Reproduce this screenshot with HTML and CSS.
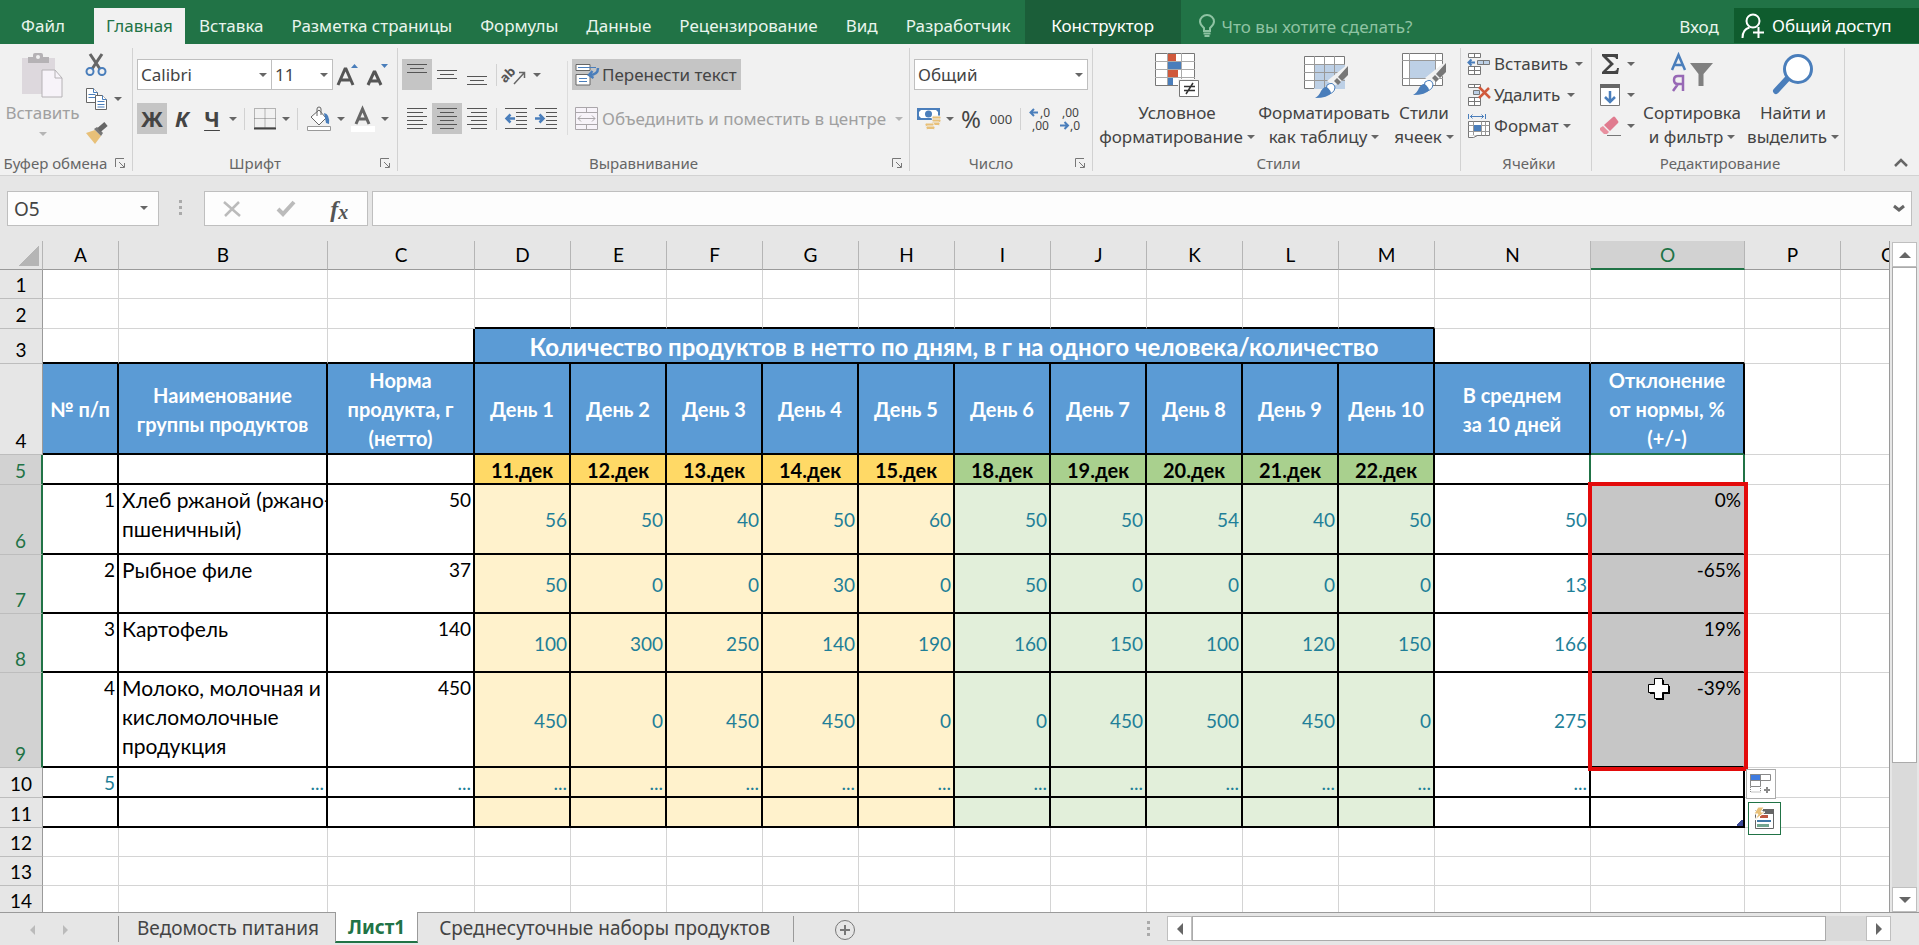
FILE: index.html
```
<!DOCTYPE html>
<html lang="ru">
<head>
<meta charset="utf-8">
<title>Ведомость питания</title>
<link rel="stylesheet" href="styles.css">
</head>
<body>
<nav class="tabs" aria-label="Лента">
  <button class="tab file">Файл</button>
  <button class="tab active">Главная</button>
  <button class="tab">Вставка</button>
  <button class="tab">Разметка страницы</button>
  <button class="tab">Формулы</button>
  <button class="tab">Данные</button>
  <button class="tab">Рецензирование</button>
  <button class="tab">Вид</button>
  <button class="tab">Разработчик</button>
  <button class="tab context">Конструктор</button>
  <label class="tell">
    <svg width="16" height="24" viewBox="0 0 16 24" fill="none" stroke="#8fc3a3" stroke-width="2"><path d="M5 17v-3C3 12 1 10.500 1 7.500a7 6.500 0 0 1 14 0c0 3-2 4.500-4 6.500v3z"/><path d="M4.500 19.500h7M5.500 22h5"/></svg>
    <input type="text" aria-label="Помощник" placeholder="Что вы хотите сделать?">
  </label>
  <button class="signin">Вход</button>
  <button class="share">
    <svg width="24" height="26" viewBox="0 0 24 26" fill="none" stroke="#fff" stroke-width="2"><circle cx="12" cy="8" r="6.500"/><path d="M1.500 25c0-6 3-9.500 7-10.500M12 19.500h11M17.500 14v11"/></svg>
    Общий доступ
  </button>
</nav>

<div class="ribbon">
  <section class="group g-clip">
    <div class="body">
      <button class="big off">
        <svg width="44" height="46" viewBox="0 0 44 46"><path d="M1 6h33v36H1z" fill="#ddd8dd"/><path d="M7 11V5h5V3q0-2 2-2h6q2 0 2 2v2h6v6z" fill="#b5b2b5"/><circle cx="17" cy="5" r="2" fill="#f1f1f1"/><path d="M21 18h13l7 8v19H21z" fill="#f7f3f9" stroke="#b5b2b5"/><path d="M34 18v8h7" fill="none" stroke="#b5b2b5"/></svg>
        <span>Вставить</span><i class="arr"></i>
      </button>
      <div class="stack">
        <button class="row" aria-label="Вырезать"><svg width="22" height="24" viewBox="0 0 22 24"><path d="M5 1l10 15M17 1L7 16" stroke="#666" stroke-width="3"/><g fill="none" stroke="#4a7ebb" stroke-width="2"><circle cx="5" cy="18.500" r="3.500"/><circle cx="17" cy="18.500" r="3.500"/></g></svg></button>
        <button class="row" aria-label="Копировать"><svg width="22" height="24" viewBox="0 0 22 24" fill="#fff" stroke="#666"><path d="M1.500 1.500h7l4 4v10h-11z"/><path d="M8.500 1.500v4h4M3.500 7.500h7M3.500 10.500h7" stroke="#4a7ebb"/><path d="M10.500 8.500h7l4 4v10h-11z"/><path d="M17.500 8.500v4h4M12.500 14.500h7M12.500 17.500h7M12.500 20h7" stroke="#4a7ebb"/></svg><i class="arr"></i></button>
        <button class="row" aria-label="Формат по образцу"><svg width="24" height="22" viewBox="0 0 24 22"><path d="M1 11l9-3 6 6-6 8z" fill="#e8c078"/><path d="M9 7l3-2 6 6-2 3z" fill="#777"/><path d="M14 8l7-6" stroke="#666" stroke-width="5"/></svg></button>
      </div>
    </div>
    <div class="cap"><span>Буфер обмена</span><button class="launch" aria-label="Параметры буфера обмена"><svg width="10" height="10" viewBox="0 0 10 10" fill="none" stroke="#777"><path d="M.5 9V.5H9M4 4l5 5M9.500 5v4.500H5"/></svg></button></div>
  </section>

  <section class="group g-font">
    <div class="body rows">
      <div class="line">
        <span class="combo c-font"><select aria-label="Шрифт"><option>Calibri</option></select><i class="arr"></i></span>
        <span class="combo c-size"><select aria-label="Размер шрифта"><option>11</option></select><i class="arr"></i></span>
        <button class="ib" aria-label="Увеличить размер"><svg width="22" height="24" viewBox="0 0 22 24"><path d="M1 22L8 6h1l7 16M4 17h9" fill="none" stroke="#555" stroke-width="3"/><path d="M14 5l3.500-4L21 5z" fill="#4a7ebb"/></svg></button>
        <button class="ib" aria-label="Уменьшить размер"><svg width="22" height="24" viewBox="0 0 22 24"><path d="M1 22L7 9h1l6 13M4 18h7" fill="none" stroke="#555" stroke-width="3"/><path d="M14 1l3.500 4L21 1z" fill="#4a7ebb"/></svg></button>
      </div>
      <div class="line">
        <button class="ib on bold">Ж</button><button class="ib bold ital">К</button><button class="ib bold under">Ч</button><button class="ab" aria-label="Вид подчёркивания"><i class="arr"></i></button>
        <i class="sep"></i>
        <button class="ib" aria-label="Границы"><svg width="22" height="22" viewBox="0 0 22 22" fill="none" stroke="#777" stroke-dasharray="1 1"><path d="M.5 .5h21v19H.5zM11 .5v20M.5 10.500h21"/><path d="M0 20.500h22" stroke="#444" stroke-dasharray="none" stroke-width="2"/></svg></button><button class="ab" aria-label="Вид границ"><i class="arr"></i></button>
        <i class="sep"></i>
        <button class="ib wide" aria-label="Цвет заливки"><svg width="26" height="26" viewBox="0 0 26 26"><path d="M5 11l8-7 7 8-7 7z" fill="#fff" stroke="#666"/><path d="M11 10V3q0-2 2-2t2 2v6" fill="none" stroke="#666"/><path d="M18 7q6 1 5 11l-3-1z" fill="#4a7ebb"/><path d="M1.500 20.500h23v4h-23z" fill="#fff" stroke="#999"/></svg></button><button class="ab" aria-label="Цвета заливки"><i class="arr"></i></button>
        <button class="ib wide" aria-label="Цвет шрифта"><svg width="26" height="26" viewBox="0 0 26 26"><path d="M6 18L12.500 3 19 18M8.500 13h8" fill="none" stroke="#666" stroke-width="3"/><path d="M1 20h24v6H1z" fill="#fff"/></svg></button><button class="ab" aria-label="Цвета шрифта"><i class="arr"></i></button>
      </div>
    </div>
    <div class="cap"><span>Шрифт</span><button class="launch" aria-label="Параметры шрифта"><svg width="10" height="10" viewBox="0 0 10 10" fill="none" stroke="#777"><path d="M.5 9V.5H9M4 4l5 5M9.500 5v4.500H5"/></svg></button></div>
  </section>

  <section class="group g-align">
    <div class="body">
      <div class="rows align-l">
        <div class="line">
          <button class="ib on" aria-label="По верхнему краю"><svg width="20" height="24" viewBox="0 0 20 24" stroke="#555"><path d="M0 1.500h20M3 5.500h14M0 9.500h20"/></svg></button>
          <button class="ib" aria-label="Посередине"><svg width="20" height="24" viewBox="0 0 20 24" stroke="#555"><path d="M0 7.500h20M3 11.500h14M0 15.500h20"/></svg></button>
          <button class="ib" aria-label="По нижнему краю"><svg width="20" height="24" viewBox="0 0 20 24" stroke="#555"><path d="M0 13.500h20M3 17.500h14M0 21.500h20"/></svg></button>
          <i class="sep"></i>
          <button class="ib" aria-label="Ориентация"><svg width="22" height="22" viewBox="0 0 22 22"><text x="-6" y="9" transform="rotate(-45 5 9) translate(0 4)" class="i-ab">ab</text><path d="M9 20L19 9M14 8.500h5.500V14" fill="none" stroke="#666" stroke-width="1.500"/></svg></button><button class="ab" aria-label="Виды ориентации"><i class="arr"></i></button>
        </div>
        <div class="line">
          <button class="ib" aria-label="По левому краю"><svg width="20" height="22" viewBox="0 0 20 22" stroke="#555"><path d="M0 .5h20M0 4.500h16M0 8.500h20M0 12.500h16M0 16.500h20M0 20.500h16"/></svg></button>
          <button class="ib on" aria-label="По центру"><svg width="20" height="22" viewBox="0 0 20 22" stroke="#555"><path d="M0 .5h20M3 4.500h14M0 8.500h20M3 12.500h14M0 16.500h20M3 20.500h14"/></svg></button>
          <button class="ib" aria-label="По правому краю"><svg width="20" height="22" viewBox="0 0 20 22" stroke="#555"><path d="M0 .5h20M4 4.500h16M0 8.500h20M4 12.500h16M0 16.500h20M4 20.500h16"/></svg></button>
          <i class="sep"></i>
          <button class="ib" aria-label="Уменьшить отступ"><svg width="22" height="22" viewBox="0 0 22 22" stroke="#555"><path d="M0 .5h22M11 4.500h11M11 8.500h11M11 12.500h11M11 16.500h11M0 20.500h22"/><path d="M10 10.500H2M5.500 6.500l-4 4 4 4" fill="none" stroke="#4a7ebb" stroke-width="2.500"/></svg></button>
          <button class="ib" aria-label="Увеличить отступ"><svg width="22" height="22" viewBox="0 0 22 22" stroke="#555"><path d="M0 .5h22M11 4.500h11M11 8.500h11M11 12.500h11M11 16.500h11M0 20.500h22"/><path d="M0 10.500h8M4.500 6.500l4 4-4 4" fill="none" stroke="#4a7ebb" stroke-width="2.500"/></svg></button>
        </div>
      </div>
      <i class="tall"></i>
      <div class="rows">
        <div class="line"><button class="wrap on"><svg width="24" height="24" viewBox="0 0 24 24" fill="#fff" stroke="#666"><path d="M1 1.500h14v6H1zM1 11.500h14v10.500H1z"/><path d="M3 4.500h18M4 15.500h8M4 18.500h8" stroke="#4a7ebb"/><path d="M23 5c0 5-3 7-9 7M17.500 8L14 12l4.500 3" fill="none" stroke="#4a7ebb" stroke-width="2.500"/></svg>Перенести текст</button></div>
        <div class="line"><button class="wrap off"><svg width="24" height="24" viewBox="0 0 24 24" fill="#f7f3f9" stroke="#aaa6aa"><path d="M.5 .5h22v22H.5zM.5 5.500h22M.5 17.500h22M11.500 .5v5M11.500 17.500v5M3 11.500h17M6 8.500l-3 3 3 3M17 8.500l3 3-3 3"/></svg>Объединить и поместить в центре<i class="arr"></i></button></div>
      </div>
    </div>
    <div class="cap"><span>Выравнивание</span><button class="launch" aria-label="Параметры выравнивания"><svg width="10" height="10" viewBox="0 0 10 10" fill="none" stroke="#777"><path d="M.5 9V.5H9M4 4l5 5M9.500 5v4.500H5"/></svg></button></div>
  </section>

  <section class="group g-num">
    <div class="body rows">
      <div class="line"><span class="combo c-num"><select aria-label="Числовой формат"><option>Общий</option></select><i class="arr"></i></span></div>
      <div class="line">
        <button class="ib" aria-label="Финансовый формат"><svg width="24" height="24" viewBox="0 0 24 24"><path d="M0 1h23v12H0z" fill="#4a7ebb"/><path d="M4 3h15l2 2v4l-2 2H4L2 9V5z" fill="#fff"/><circle cx="11.500" cy="7" r="3.500" fill="#4a7ebb"/><g fill="#e8c078" stroke="#f1f1f1"><rect x="15" y="9" width="9" height="3.500" rx="1.500"/><rect x="15" y="12" width="9" height="3.500" rx="1.500"/><rect x="14" y="15" width="9" height="3.500" rx="1.500"/><rect x="8" y="16" width="9" height="3.500" rx="1.500"/><rect x="9" y="19" width="9" height="3.500" rx="1.500"/></g></svg></button><button class="ab" aria-label="Виды валют"><i class="arr"></i></button>
        <button class="ib pct">%</button><button class="ib zeros">000</button>
        <i class="sep"></i>
        <button class="ib" aria-label="Увеличить разрядность"><svg width="24" height="26" viewBox="0 0 24 26"><text x="12" y="11" class="i-dec">,0</text><text x="4" y="24" class="i-dec">,00</text><path d="M10 6.500H3M6 3L2.500 6.500 6 10" fill="none" stroke="#4a7ebb" stroke-width="2"/></svg></button>
        <button class="ib" aria-label="Уменьшить разрядность"><svg width="24" height="26" viewBox="0 0 24 26"><text x="4" y="11" class="i-dec">,00</text><text x="12" y="24" class="i-dec">,0</text><path d="M2 19.500h8M6.500 16l3.500 3.500L6.500 23" fill="none" stroke="#4a7ebb" stroke-width="2"/></svg></button>
      </div>
    </div>
    <div class="cap"><span>Число</span><button class="launch" aria-label="Параметры числа"><svg width="10" height="10" viewBox="0 0 10 10" fill="none" stroke="#777"><path d="M.5 9V.5H9M4 4l5 5M9.500 5v4.500H5"/></svg></button></div>
  </section>

  <section class="group g-styles">
    <div class="body">
      <button class="big b1">
        <svg width="46" height="46" viewBox="0 0 46 46"><path d="M1.500 1.500h39v32h-39z" fill="#fff" stroke="#777"/><path d="M1 9.500h40M1 17.500h40M1 25.500h40M13.500 1v32M27.500 1v32" stroke="#aaa"/><path d="M14 2h8v7h-8zM14 18h10v7H14z" fill="#d0593c"/><path d="M14 10h13v7H14zM14 26h5v7h-5z" fill="#4a7ebb"/><path d="M24 27h22v19H24z" fill="#f1f1f1"/><path d="M25.500 28.500h19v16h-19z" fill="#fff" stroke="#777"/><path d="M30 34.500h11M30 38.500h11M39 31l-7 11" stroke="#333" stroke-width="1.500"/></svg>
        <span>Условное<br>форматирование<i class="arr"></i></span>
      </button>
      <button class="big b2">
        <svg width="46" height="46" viewBox="0 0 46 46"><path d="M3.500 4.500h40v32h-40z" fill="#fff" stroke="#777"/><path d="M13 13h31v24H13z" fill="#bdd0e6"/><path d="M3 12.500h41M3 20.500h41M3 28.500h41M13.500 4v32M23.500 4v32M33.500 4v32" stroke="#999"/><path d="M47 12v13L33 34l-7-5z" fill="#f1f1f1"/><path d="M47 14v9l-6 6-4-4zM36 26l4 4-3 3-4-4z" fill="#777"/><path d="M26 33q6-4 8 2 0 7-10 8z" fill="#fff" stroke="#4a7ebb"/><path d="M14 46q4-2 6-7 4-6 7-3t3 5q-3 5-16 5z" fill="#4a7ebb"/></svg>
        <span>Форматировать<br>как таблицу<i class="arr"></i></span>
      </button>
      <button class="big b3">
        <svg width="46" height="46" viewBox="0 0 46 46"><path d="M1.500 1.500h40v32h-40z" fill="#fff" stroke="#777"/><path d="M1 8.500h41M1 26.500h41M8.500 1v32M34.500 1v32" stroke="#999"/><path d="M9 9h25v17H9z" fill="#bdd0e6"/><path d="M45 9v13L31 31l-7-5z" fill="#f1f1f1"/><path d="M45 11v9l-6 6-4-4zM34 23l4 4-3 3-4-4z" fill="#777"/><path d="M24 30q6-4 8 2 0 7-10 8z" fill="#fff" stroke="#4a7ebb"/><path d="M12 43q4-2 6-7 4-6 7-3t3 5q-3 5-16 5z" fill="#4a7ebb"/></svg>
        <span>Стили<br>ячеек<i class="arr"></i></span>
      </button>
    </div>
    <div class="cap"><span>Стили</span></div>
  </section>

  <section class="group g-cells">
    <div class="body">
      <div class="stack">
        <button class="row"><svg width="23" height="24" viewBox="0 0 23 24" fill="#fff" stroke="#777"><path d="M1.500 1.500h12v4h-12zM7.500 1.500v4M1.500 14.500h12v8h-12zM1.500 18.500h12M7.500 14.500v8"/><path d="M10.500 8.500h12v4h-12zM16.500 8.500v4" fill="#bdd0e6"/><path d="M8 10.500H2M4.500 7.500l-3 3 3 3" fill="none" stroke="#4a7ebb" stroke-width="2"/></svg><span>Вставить</span><i class="arr far"></i></button>
        <button class="row"><svg width="23" height="24" viewBox="0 0 23 24" fill="#fff" stroke="#777"><path d="M1.500 1.500h12v3h-12zM7.500 1.500v3M1.500 14.500h12v8h-12zM1.500 18.500h12M7.500 14.500v8"/><path d="M6.500 7.500h6v4h-6z" fill="#bdd0e6"/><path d="M12 4l11 11M22 5L12 15" stroke="#d0593c" stroke-width="2.500"/></svg><span>Удалить</span><i class="arr far"></i></button>
        <button class="row"><svg width="23" height="24" viewBox="0 0 23 24" fill="#fff" stroke="#777"><path d="M1.500 7.500h21v14h-21z"/><path d="M1.500 11.500h21M1.500 17.500h21M6.500 7.500v14M14.500 7.500v14M18.500 7.500v14" stroke="#999"/><path d="M7 11h7v6H7z" fill="#4a7ebb" stroke="none"/><path d="M1.500 0v5M18.500 0v5M3 2.500h14M5.500 .5l-2 2 2 2M14.500 .5l2 2-2 2" fill="none" stroke="#4a7ebb"/><path d="M1.500 21v2.500h5l4-2"/></svg><span>Формат</span><i class="arr"></i></button>
      </div>
    </div>
    <div class="cap"><span>Ячейки</span></div>
  </section>

  <section class="group g-edit">
    <div class="body">
      <div class="stack">
        <button class="row" aria-label="Сумма"><svg width="22" height="22" viewBox="0 0 22 22"><path d="M3 1h16v5h-2q0-2-3-2H8l7 7-7.500 7H15q3 0 3-3h2l-1 6H3v-2l8-8-8-8z" fill="#444"/></svg><i class="arr"></i></button>
        <button class="row" aria-label="Заполнить"><svg width="22" height="24" viewBox="0 0 22 24"><path d="M1.500 1.500h19v21h-19z" fill="#fff" stroke="#777"/><path d="M1 1h20v4H1z" fill="#666"/><path d="M11 8v11M6 14l5 5 5-5" fill="none" stroke="#4a7ebb" stroke-width="2.500"/></svg><i class="arr"></i></button>
        <button class="row" aria-label="Очистить"><svg width="22" height="22" viewBox="0 0 22 22"><path d="M5 10L14 2q1-1 2 0l3 4q1 1 0 2l-8 8z" fill="#e07b8f"/><path d="M4 11l6 6-2 2H5l-4-4v-2z" fill="#e8909f"/><path d="M8 20.500h14" stroke="#777"/></svg><i class="arr"></i></button>
      </div>
      <button class="big b4">
        <svg width="44" height="46" viewBox="0 0 44 46"><path d="M2 18L8.500 3 15 18M4.500 13h8" fill="none" stroke="#4a7ebb" stroke-width="2.500"/><path d="M13 39V24H8q-4 0-4 4t4 4h5M8 32l-5 7" fill="none" stroke="#9768b5" stroke-width="2.500"/><path d="M20 11h23L33.500 22v12h-5V22z" fill="#808080"/></svg>
        <span>Сортировка<br>и фильтр<i class="arr"></i></span>
      </button>
      <button class="big b5">
        <svg width="44" height="46" viewBox="0 0 44 46"><path d="M17 26L5 39" stroke="#4a7ebb" stroke-width="6" stroke-linecap="round"/><circle cx="27" cy="17" r="13.500" fill="#fff" stroke="#4a7ebb" stroke-width="3"/></svg>
        <span>Найти и<br>выделить<i class="arr"></i></span>
      </button>
    </div>
    <div class="cap"><span>Редактирование</span></div>
  </section>
  <button class="collapse" aria-label="Свернуть ленту"><svg width="14" height="9" viewBox="0 0 14 9" fill="none" stroke="#666" stroke-width="2.500"><path d="M1 8l6-6 6 6"/></svg></button>
</div>

<div class="fbar">
  <span class="namebox"><input type="text" aria-label="Имя" value="O5"><i class="arr"></i></span>
  <i class="dots"></i>
  <div class="fx">
    <button aria-label="Отмена"><svg width="18" height="16" viewBox="0 0 18 16" stroke="#bbb" stroke-width="2.500"><path d="M1 1l16 14M16 1L2 15"/></svg></button>
    <button aria-label="Ввод"><svg width="20" height="17" viewBox="0 0 20 17" fill="none" stroke="#bbb" stroke-width="4"><path d="M2 9l5 5L18 2"/></svg></button>
    <button class="fn"><i>f</i><i class="x">x</i></button>
  </div>
  <span class="formula"><input type="text" aria-label="Строка формул"><svg width="12" height="9" viewBox="0 0 12 9" fill="none" stroke="#666" stroke-width="3"><path d="M1 2l5 4 5-4"/></svg></span>
</div>

<main class="sheet">
  <div class="gridwrap">
    <table>
      <colgroup><col class="w-h"><col class="w-a"><col class="w-b"><col class="w-c"><col span="10" class="w-d"><col class="w-n"><col class="w-o"><col span="2" class="w-d"></colgroup>
      <thead>
        <tr><th class="corner"></th><th>A</th><th>B</th><th>C</th><th>D</th><th>E</th><th>F</th><th>G</th><th>H</th><th>I</th><th>J</th><th>K</th><th>L</th><th>M</th><th>N</th><th class="sel">O</th><th>P</th><th>Q</th></tr>
      </thead>
      <tbody>
        <tr class="h29"><th>1</th><td></td><td></td><td></td><td></td><td></td><td></td><td></td><td></td><td></td><td></td><td></td><td></td><td></td><td></td><td></td><td></td><td></td></tr>
        <tr class="h30"><th>2</th><td></td><td></td><td></td><td class="kb"></td><td class="kb"></td><td class="kb"></td><td class="kb"></td><td class="kb"></td><td class="kb"></td><td class="kb"></td><td class="kb"></td><td class="kb"></td><td class="kb"></td><td></td><td></td><td></td><td></td></tr>
        <tr class="h35"><th>3</th><td class="kb"></td><td class="kb"></td><td class="kb kr"></td><td colspan="10" class="kb kr title">Количество продуктов в нетто по дням, в г на одного человека/количество</td><td class="kb"></td><td class="kb"></td><td></td><td></td></tr>
        <tr class="h91 head"><th>4</th><td class="k">№ п/п</td><td class="k">Наименование<br>группы продуктов</td><td class="k">Норма<br>продукта, г<br>(нетто)</td><td class="k">День 1</td><td class="k">День 2</td><td class="k">День 3</td><td class="k">День 4</td><td class="k">День 5</td><td class="k">День 6</td><td class="k">День 7</td><td class="k">День 8</td><td class="k">День 9</td><td class="k">День 10</td><td class="k">В среднем<br>за 10 дней</td><td class="k gb">Отклонение<br>от нормы, %<br>(+/-)</td><td></td><td></td></tr>
        <tr class="h30 dates"><th class="sel">5</th><td class="k"></td><td class="k"></td><td class="k"></td><td class="k y">11.дек</td><td class="k y">12.дек</td><td class="k y">13.дек</td><td class="k y">14.дек</td><td class="k y">15.дек</td><td class="k g">18.дек</td><td class="k g">19.дек</td><td class="k g">20.дек</td><td class="k g">21.дек</td><td class="k g">22.дек</td><td class="k gr"></td><td class="k gr"></td><td></td><td></td></tr>
        <tr class="h70"><th class="sel">6</th><td class="k t">1</td><td class="k t name">Хлеб ржаной (ржано-<br>пшеничный)</td><td class="k t">50</td><td class="k n y">56</td><td class="k n y">50</td><td class="k n y">40</td><td class="k n y">50</td><td class="k n y">60</td><td class="k n g">50</td><td class="k n g">50</td><td class="k n g">54</td><td class="k n g">40</td><td class="k n g">50</td><td class="k n">50</td><td class="k t s">0%<div class="mark"></div></td><td></td><td></td></tr>
        <tr class="h59"><th class="sel">7</th><td class="k t">2</td><td class="k t name">Рыбное филе</td><td class="k t">37</td><td class="k n y">50</td><td class="k n y">0</td><td class="k n y">0</td><td class="k n y">30</td><td class="k n y">0</td><td class="k n g">50</td><td class="k n g">0</td><td class="k n g">0</td><td class="k n g">0</td><td class="k n g">0</td><td class="k n">13</td><td class="k t s">-65%</td><td></td><td></td></tr>
        <tr class="h59"><th class="sel">8</th><td class="k t">3</td><td class="k t name">Картофель</td><td class="k t">140</td><td class="k n y">100</td><td class="k n y">300</td><td class="k n y">250</td><td class="k n y">140</td><td class="k n y">190</td><td class="k n g">160</td><td class="k n g">150</td><td class="k n g">100</td><td class="k n g">120</td><td class="k n g">150</td><td class="k n">166</td><td class="k t s">19%</td><td></td><td></td></tr>
        <tr class="h95"><th class="sel">9</th><td class="k t">4</td><td class="k t name">Молоко, молочная и<br>кисломолочные<br>продукция</td><td class="k t">450</td><td class="k n y">450</td><td class="k n y">0</td><td class="k n y">450</td><td class="k n y">450</td><td class="k n y">0</td><td class="k n g">0</td><td class="k n g">450</td><td class="k n g">500</td><td class="k n g">450</td><td class="k n g">0</td><td class="k n">275</td><td class="k t s">-39%<svg class="cursor" width="22" height="22" viewBox="0 0 22 22"><path d="M8 2h8v6h6v8h-6v6H8v-6H2V8h6z"/><path d="M6.500 .5h8v6h6v8h-6v6h-8v-6h-6v-8h6z" fill="#fff" stroke="#000"/></svg></td><td></td><td></td></tr>
        <tr class="h30"><th>10</th><td class="k n">5</td><td class="k n">...</td><td class="k n">...</td><td class="k n y">...</td><td class="k n y">...</td><td class="k n y">...</td><td class="k n y">...</td><td class="k n y">...</td><td class="k n g">...</td><td class="k n g">...</td><td class="k n g">...</td><td class="k n g">...</td><td class="k n g">...</td><td class="k n">...</td><td class="k n"><button class="quick" aria-label="Параметры автозаполнения"><svg width="22" height="22" viewBox="0 0 22 22" fill="#fff" stroke="#888"><path d="M.5 1.500h20v6H.5zM.5 7.500h10v6H.5z"/><path d="M.5 1.500h10v6H.5z" fill="#3f7be0"/><path d="M.5 14v5h10v-5" stroke-dasharray="1 1"/><path d="M14 17h6M17 14v6" stroke-width="2"/></svg></button></td><td></td><td></td></tr>
        <tr class="h30"><th>11</th><td class="k"></td><td class="k"></td><td class="k"></td><td class="k n y"></td><td class="k n y"></td><td class="k n y"></td><td class="k n y"></td><td class="k n y"></td><td class="k n g"></td><td class="k n g"></td><td class="k n g"></td><td class="k n g"></td><td class="k n g"></td><td class="k"></td><td class="k last"><i class="handle"></i><button class="quick qa" aria-label="Быстрый анализ"><svg width="23" height="23" viewBox="0 0 23 23"><path d="M2.500 3.500h18v18h-18z" fill="#fff" stroke="#666"/><path d="M10 2h11v5H10z" fill="#666"/><path d="M7 8h8v3H7z" fill="#c0563f"/><path d="M4 13h14v2H4z" fill="#3f78a5"/><path d="M4 17h12v3H4z" fill="#72a58f"/><path d="M5 0h6L8 5h4L2 13l3-6H1z" fill="#e8c078" stroke="#fff"/></svg></button></td><td></td><td></td></tr>
        <tr class="h29"><th>12</th><td></td><td></td><td></td><td></td><td></td><td></td><td></td><td></td><td></td><td></td><td></td><td></td><td></td><td></td><td></td><td></td><td></td></tr>
        <tr class="h29"><th>13</th><td></td><td></td><td></td><td></td><td></td><td></td><td></td><td></td><td></td><td></td><td></td><td></td><td></td><td></td><td></td><td></td><td></td></tr>
        <tr class="h29"><th>14</th><td></td><td></td><td></td><td></td><td></td><td></td><td></td><td></td><td></td><td></td><td></td><td></td><td></td><td></td><td></td><td></td><td></td></tr>
      </tbody>
    </table>
  </div>
  <div class="vscroll">
    <button aria-label="Вверх"><i class="tri up"></i></button>
    <div class="track"><div class="thumb"></div></div>
    <button aria-label="Вниз"><i class="tri down"></i></button>
  </div>
</main>

<footer class="bottom">
  <div class="navs"><button aria-label="Предыдущий лист"><i class="tri left"></i></button><button aria-label="Следующий лист"><i class="tri right"></i></button></div>
  <button class="stab">Ведомость питания</button>
  <button class="stab active">Лист1</button>
  <button class="stab last">Среднесуточные наборы продуктов</button>
  <button class="add" aria-label="Новый лист"><svg width="20" height="20" viewBox="0 0 20 20" fill="none" stroke="#777"><circle cx="10" cy="10" r="9.500"/><path d="M10 5v10M5 10h10" stroke-width="2"/></svg></button>
  <div class="hbar">
    <i class="dots small"></i>
    <div class="hscroll">
      <button aria-label="Влево"><i class="tri left"></i></button>
      <div class="track"><div class="thumb"></div></div>
      <button aria-label="Вправо"><i class="tri right"></i></button>
    </div>
  </div>
</footer>
</body>
</html>
```
FILE: styles.css
```
* { box-sizing: border-box; }
html, body { height: 100%; }
body {
  margin: 0;
  display: flex;
  flex-direction: column;
  overflow: hidden;
  background: #e6e6e6;
  color: #444;
  font-family: "Noto Sans", "Open Sans", sans-serif;
  font-size: 17px;
}
button, input, select {
  margin: 0;
  padding: 0;
  border: 0;
  border-radius: 0;
  background: none;
  color: inherit;
  font: inherit;
  white-space: nowrap;
}
svg { display: block; flex: none; overflow: visible; }

/* tabs */
.tabs { flex: none; display: flex; height: 44px; padding-top: 8px; background: #217346; color: #e9f5ed; }
.tab { flex: none; padding: 0 14px; line-height: 36px; }
.tab.file { width: 94px; padding: 0 8px 0 0; }
.tab.active { width: 91px; padding: 0; background: #f1f1f1; color: #217346; }
.tab.context { width: 156px; margin-top: -8px; padding-top: 8px; background: #1b5e39; color: #fff; }
.tell { display: flex; flex: 1; align-items: center; gap: 7px; padding-left: 18px; }
.tell input { flex: 1; min-width: 0; }
.tell input::placeholder { color: #8fc3a3; opacity: 1; }
.signin { width: 70px; }
.share { display: flex; align-items: center; gap: 7px; width: 185px; margin-bottom: 1px; padding-left: 7px; background: #0f5c2e; color: #fff; }

/* ribbon */
.ribbon { flex: none; display: flex; height: 132px; padding: 4px 0; background: #f1f1f1; border-bottom: 1px solid #d2d2d2; }
.group { flex: none; display: flex; flex-direction: column; border-right: 1px solid #d2d2d2; padding-left: 4px; }
.g-clip { width: 133px; padding-left: 3px; }
.g-font { width: 265px; }
.g-align { width: 512px; }
.g-num { width: 183px; }
.g-styles { width: 368px; }
.g-cells { width: 131px; }
.g-edit { width: 253px; }
.body { flex: 1; display: flex; }
.rows { display: flex; flex-direction: column; gap: 13px; padding-top: 11px; }
.line { display: flex; align-items: center; height: 31px; }
.cap { display: flex; align-items: center; height: 16px; font-size: 15px; color: #666; line-height: 16px; }
.cap span { flex: 1; text-align: center; white-space: nowrap; }
.launch { width: 24px; height: 16px; display: grid; place-items: center; }
.ib { display: grid; place-items: center; width: 30px; height: 31px; }
.ib.wide { width: 32px; }
.ab { display: grid; place-items: center; width: 12px; height: 31px; }
.on { background: #c5c5c5; }
.off { color: #a0a0a0; }
.bold { font-size: 22px; line-height: 31px; font-weight: 700; }
.ital { font-style: italic; }
.under { text-decoration: underline; text-decoration-thickness: 1px; text-underline-offset: 3px; }
.pct { font-size: 24px; line-height: 31px; }
.zeros { font-size: 13px; }
.i-ab { font: 700 13px "Noto Sans", sans-serif; fill: #555; }
.i-dec { font: 12px "Noto Sans", sans-serif; fill: #444; }
.arr { flex: none; display: inline-block; width: 8px; height: 4px; border: 4px solid transparent; border-top-color: #666; border-bottom: 0; }
.off .arr { border-top-color: #b5b5b5; }
.sep { width: 1px; height: 22px; margin: 0 4px; background: #d2d2d2; }
.g-font .sep { margin: 0 5px; }
.tall { width: 1px; height: 74px; margin: 13px 4px 0 0; background: #dcdcdc; }
.align-l { width: 165px; }
.combo { position: relative; display: flex; height: 31px; background: #fff; border: 1px solid #bfbfbf; }
.combo select { appearance: none; width: 100%; padding-left: 3px; }
.combo .arr, .namebox .arr { position: absolute; right: 4px; top: 13px; }
.c-font { width: 135px; }
.c-size { width: 62px; margin-left: -1px; }
.c-num { width: 174px; }
.wrap { display: flex; align-items: center; gap: 3px; height: 31px; padding: 0 4px 0 3px; }
.wrap .arr { margin-left: 6px; }
.big { display: flex; flex-direction: column; align-items: center; gap: 3px; padding-top: 4px; line-height: 24px; }
.g-clip .big { width: 79px; }
.g-clip .big .arr { margin-top: 4px; }
.big span { display: block; }
.big span .arr { margin-left: 4px; vertical-align: 4px; }
.b1 { width: 160px; }
.b2 { width: 134px; }
.b3 { width: 66px; }
.b4 { width: 104px; }
.b5 { width: 98px; }
.stack { display: flex; flex-direction: column; }
.row { display: flex; align-items: center; gap: 4px; height: 31px; }
.g-cells { padding-left: 6px; }
.row .far { margin-left: 3px; }
.g-clip .row { height: 34px; gap: 7px; padding-left: 3px; }
.g-edit .stack { width: 44px; padding-left: 3px; }
.g-edit .row { gap: 6px; }
.collapse { margin: 0 11px 4px auto; align-self: flex-end; }

/* formula bar */
.fbar { flex: none; display: flex; height: 50px; padding: 15px 7px 0 7px; }
.namebox, .fx, .formula { display: flex; align-items: center; background: #fdfdfd; border: 1px solid #bfbfbf; }
.namebox { position: relative; width: 152px; }
.namebox input { width: 120px; padding-left: 6px; font-size: 19px; }
.namebox .arr { right: 10px; top: 14px; }
.dots { width: 3px; height: 15px; margin: 9px 22px 0 20px; background: repeating-linear-gradient(#aaa 0 3px, transparent 3px 6px); }
.fx { width: 164px; padding: 0 1px 0 0; }
.fx button { flex: 1; display: flex; justify-content: center; align-items: center; }
.fn { font: italic 700 24px/30px "Liberation Serif", serif; color: #555; }
.fn .x { font-size: 20px; padding-top: 6px; }
.formula { flex: 1; margin-left: 4px; padding-right: 6px; }
.formula input { flex: 1; font-size: 19px; }

/* sheet */
.sheet { flex: 1; display: flex; min-height: 0; padding-top: 15px; }
.gridwrap { flex: 1; min-width: 0; overflow: hidden; border-right: 1px solid #9a9a9a; background: #fff; }
table { width: 1937px; table-layout: fixed; border-spacing: 0; font-family: Lato, "Open Sans", sans-serif; font-size: 20px; line-height: 28px; color: #000; }
.w-h { width: 43px; }
.w-a { width: 76px; }
.w-b { width: 209px; }
.w-c { width: 147px; }
.w-d { width: 96px; }
.w-n { width: 156px; }
.w-o { width: 154px; }
th { padding: 0; font-weight: 400; background: #e6e6e6; }
thead th { height: 29px; border-bottom: 1px solid #9a9a9a; border-right: 1px solid #b5b5b5; font-size: 19px; }
thead .sel { background: #d2d2d2; color: #217346; border-bottom: 2px solid #217346; line-height: 27px; }
.corner { background: linear-gradient(135deg, transparent 50%, #b5b5b5 50%) 18px 5px / 21px 20px no-repeat #e6e6e6; }
tbody th { vertical-align: bottom; border-right: 1px solid #9a9a9a; border-bottom: 1px solid #bdbdbd; font-size: 19px; line-height: 26px; }
tbody th.sel { background: #d2d2d2; color: #217346; border-right: 2px solid #217346; }
td { position: relative; padding: 0 2px; border-right: 1px solid #d4d4d4; border-bottom: 1px solid #d4d4d4; white-space: nowrap; }
.h29 { height: 29px; }
.h30 { height: 30px; }
.h35 { height: 35px; }
.h59 { height: 59px; }
.h70 { height: 70px; }
.h91 { height: 91px; }
.h95 { height: 95px; }
.k, .kb { border-bottom: 2px solid #000; }
.k, .kr { border-right: 2px solid #000; }
.title { background: #5b9bd5; color: #fff; font-size: 24px; font-weight: 700; text-align: center; padding-top: 2px; }
.head .k { background: #5b9bd5; color: #fff; font-weight: 700; line-height: 29px; text-align: center; padding: 2px 0 0; }
.dates .k { font-weight: 700; text-align: center; line-height: 26px; padding-top: 2px; }
.dates .y { background: #ffd966; }
.dates .g { background: #a9d08e; }
.gb { border-bottom-color: #217346; }
.gr { border-right-color: #217346; }
.t { vertical-align: top; text-align: right; line-height: 29px; font-size: 19px; }
.name { text-align: left; font-size: 21px; padding: 0 0 0 3px; overflow: hidden; }
.n { text-align: right; color: #1f7f98; font-size: 19px; line-height: 26px; padding-top: 2px; }
.n.y { background: #fff2cc; }
.n.g { background: #e2efda; }
.s { background: #c6c6c6; border-right-color: #c6c6c6; }
.mark { position: absolute; z-index: 2; left: -3px; top: -3px; width: 160px; height: 289px; border: 4px solid #e30b0b; pointer-events: none; }
.cursor { position: absolute; left: 57px; top: 5px; }
.quick { position: absolute; z-index: 3; left: 155px; top: 1px; display: grid; place-items: center; width: 30px; height: 30px; background: #fff; border: 1px solid #ababab; }
.qa { left: 157px; top: 4px; width: 33px; height: 33px; border-color: #217346; }
.handle { position: absolute; right: 0; bottom: 0; width: 6px; height: 6px; background: linear-gradient(135deg, transparent 40%, #3b4a98 40%); }

/* scroll bars */
.vscroll { flex: none; display: flex; flex-direction: column; width: 25px; margin: 1px 2px 0 2px; }
.vscroll button, .hscroll button { flex: none; display: grid; place-items: center; width: 25px; height: 25px; background: #fff; border: 1px solid #bfbfbf; }
.track { flex: 1; background: #dadada; }
.thumb { background: #fff; border: 1px solid #ababab; }
.vscroll .thumb { height: 80%; }
.tri { width: 0; height: 0; border: 6px solid transparent; }
.up { border-bottom-color: #666; border-top: 0; }
.down { border-top-color: #666; border-bottom: 0; }
.left { border-right-color: #666; border-left: 0; }
.right { border-left-color: #666; border-right: 0; }

/* sheet tabs */
.bottom { flex: none; display: flex; height: 33px; font-size: 19px; }
.navs { display: flex; align-items: center; gap: 28px; width: 118px; padding: 2px 0 0 30px; border-top: 1px solid #9a9a9a; }
.navs .tri { display: block; border-width: 5px; }
.navs .left { border-left: 0; border-right-color: #bbb; }
.navs .right { border-right: 0; border-left-color: #bbb; }
.stab { padding: 0 16px 3px 19px; line-height: 28px; border-top: 1px solid #9a9a9a; background: linear-gradient(#9a9a9a, #9a9a9a) 0 3px / 1px 26px no-repeat; }
.stab.active { height: 31px; padding: 0 12px; background: #fff; color: #217346; font-weight: 700; border: 1px solid #9a9a9a; border-width: 0 1px 2px; border-bottom-color: #217346; }
.stab.last { background: linear-gradient(#9a9a9a, #9a9a9a) 100% 3px / 1px 26px no-repeat; padding: 0 24px 3px 21px; }
.add { display: grid; place-items: center; width: 102px; padding-top: 2px; border-top: 1px solid #9a9a9a; }
.hbar { flex: 1; display: flex; justify-content: flex-end; border-top: 1px solid #9a9a9a; padding-right: 28px; }
.hscroll { display: flex; width: 724px; margin-top: 3px; height: 25px; }
.hscroll .thumb { width: 94%; height: 25px; }
.small { margin: 8px 17px 0 0; }
```
